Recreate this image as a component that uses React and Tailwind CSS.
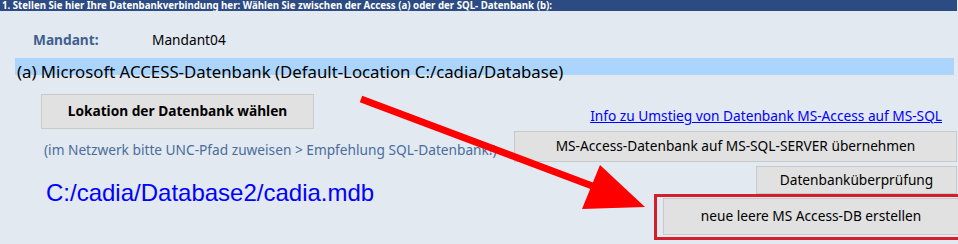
import React from "react";

const FONT = { fontFamily: '"Noto Sans", "Open Sans", sans-serif' };

function WinButton({ children, className = "" }) {
  return (
    <div
      className={`flex items-center justify-center border border-[#c9c9c9] bg-[#e1e1e1] text-[13.7px] text-black ${className}`}
    >
      {children}
    </div>
  );
}

function Arrow() {
  // red annotation arrow lying over the form
  return (
    <svg className="pointer-events-none absolute left-0 top-0" width="958" height="244">
      <line x1="361" y1="99" x2="595" y2="187" stroke="#ff0000" strokeWidth="7" />
      <polygon points="600,165 645,207 582,209" fill="#ff0000" />
    </svg>
  );
}

export default function App() {
  return (
    <div className="relative h-[244px] w-[958px] overflow-hidden bg-[#e2e9f1]" style={FONT}>
      <div className="mr-[1px] h-[11px] overflow-hidden bg-[#2b4b82] pl-[2px] text-[9.7px] font-bold leading-[11px] text-white">
        1. Stellen Sie hier Ihre Datenbankverbindung her: Wählen Sie zwischen der Access (a) oder der SQL- Datenbank (b):
      </div>

      <div className="flex h-[47px] items-center pl-[33px] pt-[12px] text-[13.7px]">
        <span className="w-[119px] font-bold text-[#3f5f8e]">Mandant:</span>
        <span className="text-black">Mandant04</span>
      </div>

      <div className="ml-[15px] mr-[4px] h-[17px] whitespace-nowrap bg-[#abd5fc] pl-[2px] text-[16.8px] leading-[28px] text-black">
        (a) Microsoft ACCESS-Datenbank (Default-Location C:/cadia/Database)
      </div>

      <div className="flex justify-between pr-[1px]">
        <div className="flex flex-col pl-[41px] pt-[19px]">
          <WinButton className="h-[35px] w-[273px] font-bold">Lokation der Datenbank wählen</WinButton>
          <div className="mt-[12px] whitespace-nowrap pl-[3px] text-[13.7px] leading-[18px] text-[#4a6d9c]">
            (im Netzwerk bitte UNC-Pfad zuweisen &gt; Empfehlung SQL-Datenbank!)
          </div>
          <div
            className="mt-[20px] pl-[5px] text-[24px] leading-[28px] text-[#0000ff]"
            style={{ fontFamily: '"Liberation Sans", Arial, sans-serif' }}
          >
            C:/cadia/Database2/cadia.mdb
          </div>
        </div>

        <div className="flex flex-col items-end pt-[32px]">
          <a className="mr-[15px] whitespace-nowrap text-[13.7px] leading-[18px] text-[#0000ff] underline">
            Info zu Umstieg von Datenbank MS-Access auf MS-SQL
          </a>
          <WinButton className="mt-[6px] h-[31px] w-[443px]">
            MS-Access-Datenbank auf MS-SQL-SERVER übernehmen
          </WinButton>
          <WinButton className="mt-[4px] h-[28px] w-[201px]">Datenbanküberprüfung</WinButton>
          <div className="-mr-[1px] h-[46px] w-[304px] border-[3px] border-r-0 border-[#d31f2a] pl-[6px] pt-[1px]">
            <WinButton className="h-[37px] w-full border-r-0">neue leere MS Access-DB erstellen</WinButton>
          </div>
        </div>
      </div>

      <Arrow />
    </div>
  );
}
